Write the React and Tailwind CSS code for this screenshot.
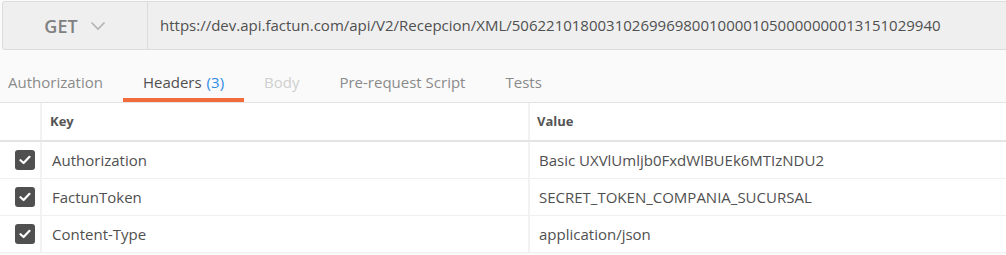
const TABS = [
  { label: 'Authorization', state: 'normal' },
  { label: 'Headers', state: 'active', count: 3 },
  { label: 'Body', state: 'disabled' },
  { label: 'Pre-request Script', state: 'normal' },
  { label: 'Tests', state: 'normal' },
]

const HEADERS = [
  { key: 'Authorization', value: 'Basic UXVlUmljb0FxdWlBUEk6MTIzNDU2' },
  { key: 'FactunToken', value: 'SECRET_TOKEN_COMPANIA_SUCURSAL' },
  { key: 'Content-Type', value: 'application/json' },
]

function Checkbox() {
  return (
    <span className="w-[20px] h-[20px] rounded-[3px] bg-[#505050] flex items-center justify-center">
      <svg width="12" height="10" viewBox="0 0 12 10" fill="none">
        <path d="M1.5 5.2 L4.6 8 L10.5 1.8" stroke="#fff" strokeWidth="2.2" strokeLinecap="round" strokeLinejoin="round" />
      </svg>
    </span>
  )
}

export default function App() {
  return (
    <div className="w-[1006px] h-[255px] overflow-hidden bg-[#fafafa] font-['Open_Sans',sans-serif]">
      {/* Request bar */}
      <div className="ml-[2px] mt-[1px] w-[1010px] h-[49px] flex border border-[#dcdcdc] rounded-l-[3px] bg-[#efefef]">
        <div className="w-[145px] shrink-0 flex items-center justify-center gap-[12px] border-r border-[#dcdcdc]">
          <span className="text-[18px] font-semibold text-[#808080] leading-none">GET</span>
          <svg width="16" height="10" viewBox="0 0 16 10" fill="none">
            <path d="M1.5 1.5 L8 8 L14.5 1.5" stroke="#b3b3b3" strokeWidth="1.6" />
          </svg>
        </div>
        <div className="flex items-center pl-[12px] text-[15px] text-[#505050] whitespace-nowrap">
          https://dev.api.factun.com/api/V2/Recepcion/XML/50622101800310269969800100001050000000013151029940
        </div>
      </div>

      {/* Tabs */}
      <div className="h-[53px] flex items-end border-b border-[#e2e2e2] -ml-[12px]">
        {TABS.map(t => (
          <div
            key={t.label}
            className={`px-5 pb-[6px] border-b-4 text-[15px] leading-[20px] whitespace-nowrap ${
              t.state === 'active' ? 'border-[#f26b3a] text-[#505050]' : 'border-transparent'
            } ${t.state === 'normal' ? 'text-[#8a8a8a]' : ''} ${t.state === 'disabled' ? 'text-[#cfcfcf]' : ''}`}
          >
            {t.label}
            {t.count != null && <span className="ml-[5px] text-[#2f8ae5]">({t.count})</span>}
          </div>
        ))}
      </div>

      {/* Headers table */}
      <div className="bg-white">
        <div className="h-[39px] flex border-b-2 border-[#e4e4e4] text-[13px] font-bold text-[#555]">
          <div className="w-[40px] shrink-0" />
          <div className="w-[488px] shrink-0 flex items-center pl-[8px] border-l-2 border-[#f2f2f2]">Key</div>
          <div className="flex-1 flex items-center pl-[7px] border-l-2 border-[#f2f2f2]">Value</div>
        </div>
        {HEADERS.map(h => (
          <div key={h.key} className="h-[37px] flex border-b border-[#f0f0f0] text-[15px] text-[#505050]">
            <div className="w-[40px] shrink-0 flex items-center pl-[15px]">
              <Checkbox />
            </div>
            <div className="w-[488px] shrink-0 flex items-center pl-[10px] border-l-2 border-[#f2f2f2]">{h.key}</div>
            <div className="flex-1 flex items-center pl-[9px] border-l-2 border-[#f2f2f2]">{h.value}</div>
          </div>
        ))}
      </div>
    </div>
  )
}
